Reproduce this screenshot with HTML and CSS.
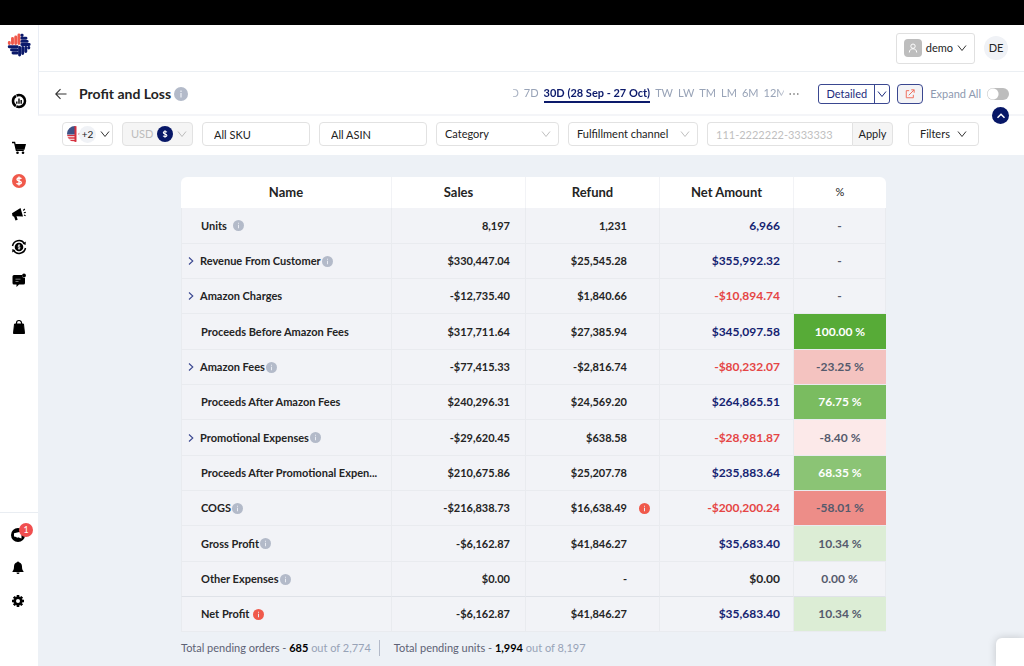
FILE: index.html
```html
<!DOCTYPE html>
<html lang="en">
<head>
<meta charset="utf-8">
<title>Profit and Loss</title>
<link rel="stylesheet" href="styles.css">
</head>
<body>
<svg class="sprite" aria-hidden="true">
  <symbol id="down" viewBox="0 0 10 10"><path d="M1 2.500 5 7.500 9 2.500" fill="none" stroke="currentColor"/></symbol>
  <symbol id="right" viewBox="0 0 10 10"><path d="M3 1.500 6.800 5 3 8.500" fill="none" stroke="currentColor" stroke-width="1.100"/></symbol>
  <symbol id="info" viewBox="0 0 12 12"><circle cx="6" cy="6" r="6" fill="currentColor"/><path d="M6 5.200V9M6 3v1.200" stroke="#e9ecf3" stroke-width="1.100"/></symbol>
</svg>
<div class="topstrip"></div>
<div class="app">
  <aside class="sidebar">
    <a class="logo" href="#" aria-label="Home">
      <svg viewBox="0 0 24 24" width="24" height="24">
        <g stroke-width="2.900" stroke-linecap="round" fill="none">
          <path d="M2.300 10.500V9.500M5.500 10.500V5.500M8.700 10.500V4M11.900 10.500V2" stroke="#f0594b"/>
          <path d="M14.800 2.200h.4M14.800 5.300h4.200M14.800 8.400h5.400M14.800 11.500h7.400M2.200 13.800h8M4.500 16.900h5.700M6 20h4.200" stroke="#0c1a6b"/>
          <path d="M12.600 14.500V22M15.700 14.500V20.500M18.800 14.500V18.500M21.800 14.400v.6" stroke="#0c1a6b"/>
        </g>
      </svg>
    </a>
    <nav class="nav">
      <ul>
        <li><a href="#" aria-label="Dashboard"><svg viewBox="0 0 16 16" width="16" height="16"><circle cx="8" cy="8" r="6" fill="none" stroke="#000" stroke-width="2.500" stroke-dasharray="11.900 .6"/><path d="M5.800 10.800V8.500M8 10.800V5.500M10.200 10.800V7" stroke="#000" stroke-width="1.400"/></svg></a></li>
      </ul>
      <ul>
        <li><a href="#" aria-label="Orders"><svg viewBox="0 0 16 16" width="16" height="16"><path d="M1 2.500h2.600l1.800 7.800h7.400" fill="none" stroke="#000" stroke-width="1.300"/><path d="M4 4h11l-1.500 5.800H5.300z"/><circle cx="6.500" cy="12.800" r="1.300"/><circle cx="12" cy="12.800" r="1.300"/></svg></a></li>
        <li><a href="#" aria-label="Profit and Loss"><svg viewBox="0 0 16 16" width="16" height="16"><circle cx="8" cy="8" r="7" fill="#f0594b"/><path d="M10.300 5.800C9.800 4.900 6 4.500 6 6.400c0 2 4.300 1 4.300 3.200 0 2-4 1.800-4.700.5M8 3.500v9" fill="none" stroke="#fff" stroke-width="1.400"/></svg></a></li>
        <li><a href="#" aria-label="Advertising"><svg viewBox="0 0 16 16" width="16" height="16"><path d="M1 7.300 9.500 2l2.500 8.500-6.500-.3 1.200 3.600-2.200.7-1.400-3.700L1.500 10z"/><path d="m12.300 4.500 1.500-1.500M12.800 6.800l2-.4M13 9l1.600.8" stroke="#000" stroke-width="1.100"/></svg></a></li>
        <li><a href="#" aria-label="Reimbursements"><svg viewBox="0 0 16 16" width="16" height="16"><circle cx="8" cy="8" r="4.300"/><path d="M1.500 7a6.600 6.600 0 0 1 12-2.400M14.500 9a6.600 6.600 0 0 1-12 2.400" fill="none" stroke="#000" stroke-width="1.500"/><path d="m14.800 2.500-.2 3.500-3-1.200zM1.200 13.500 1.400 10l3 1.200z"/><path d="M9.200 6.700c-.6-.8-2.400-.5-2.200.5.200.9 2.200.6 2.200 1.700 0 1-1.800 1.100-2.400.2M8 5.300v5.400" stroke="#fff" stroke-width=".8" fill="none"/></svg></a></li>
        <li><a href="#" aria-label="Messages"><svg viewBox="0 0 16 16" width="16" height="16"><path d="M3 3h8a3 3 0 0 0 3 3v5a1.500 1.500 0 0 1-1.500 1.500H8L5.500 15v-2.500H3A1.500 1.500 0 0 1 1.500 11V4.500A1.500 1.500 0 0 1 3 3z"/><circle cx="13" cy="3.500" r="1.900"/><path d="M4.500 7.200h5M4.500 9.500h3" stroke="#999" stroke-width=".8"/></svg></a></li>
      </ul>
      <ul>
        <li><a href="#" aria-label="Products"><svg viewBox="0 0 16 16" width="16" height="16"><path d="M3.500 5h9l1 9.500h-11z" stroke="#000" stroke-linejoin="round"/><path d="M5.500 6V4a2.500 2.500 0 0 1 5 0v2" fill="none" stroke="#000" stroke-width="1.200"/></svg></a></li>
      </ul>
    </nav>
    <ul class="tools">
      <li><a href="#" aria-label="Announcements"><svg viewBox="0 0 16 16" width="16" height="16"><circle cx="8" cy="8" r="7"/><path d="M4 6.200 11.500 4.500v7L8 10.200l-1 .8-.6-1L4 9.500z" fill="#fff"/></svg><span class="badge">1</span></a></li>
      <li><a href="#" aria-label="Notifications"><svg viewBox="0 0 16 16" width="16" height="16"><path d="M8 2.200c2.700 0 4 1.900 4 4.300 0 2.700.6 3.700 1.500 4.700v.8h-11v-.8c.900-1 1.500-2 1.500-4.700 0-2.400 1.300-4.300 4-4.300z"/><circle cx="8" cy="2.500" r="1"/><path d="M6.500 12.500h3a1.500 1.500 0 0 1-3 0z"/></svg></a></li>
      <li><a href="#" aria-label="Settings"><svg viewBox="0 0 16 16" width="16" height="16"><circle cx="8" cy="8" r="3.300" fill="none" stroke="#000" stroke-width="2.600"/><path d="M8 2v2M8 12v2M2 8h2M12 8h2M3.800 3.800l1.400 1.400M10.800 10.800l1.400 1.400M3.800 12.200l1.400-1.400M10.800 5.200l1.400-1.400" stroke="#000" stroke-width="2.600"/></svg></a></li>
    </ul>
  </aside>

  <div class="page">
    <header class="account">
      <button class="user"><span class="avatar"><svg viewBox="0 0 12 12" width="12" height="12"><circle cx="6" cy="4.200" r="2.200" fill="none" stroke="#fff"/><path d="M2.300 10.500c0-5 7.400-5 7.400 0" fill="none" stroke="#fff"/></svg></span>demo<svg class="chev" width="10" height="10"><use href="#down"/></svg></button>
      <span class="initials">DE</span>
    </header>

    <div class="titlebar">
      <a class="back" href="#" aria-label="Back"><svg viewBox="0 0 12 12" width="12" height="12"><path d="M11.500 6H1M5.500 1.200.8 6l4.700 4.800" fill="none" stroke="#333" stroke-width="1.100"/></svg></a>
      <h1>Profit and Loss</h1>
      <svg class="info" width="14" height="14"><use href="#info"/></svg>
      <div class="ranges">
        <button>D</button><button>7D</button><button class="current">30D (28 Sep - 27 Oct)</button><button>TW</button><button>LW</button><button>TM</button><button>LM</button><button>6M</button><button>12M</button>
      </div>
      <button class="more" aria-label="More ranges"><svg viewBox="0 0 10 4" width="10" height="4"><g fill="#555"><circle cx="1.200" cy="2" r=".8"/><circle cx="5" cy="2" r=".8"/><circle cx="8.800" cy="2" r=".8"/></g></svg></button>
      <div class="split"><button class="view">Detailed</button><button class="viewmenu" aria-label="Choose view"><svg width="10" height="10"><use href="#down"/></svg></button></div>
      <button class="export" aria-label="Export"><svg viewBox="0 0 12 12" width="10" height="10"><path d="M5 2H1.500v8.500H10V7M4.500 7.500 11 1M7.500 1H11v3.500" fill="none" stroke="#f0705f" stroke-width="1.200"/></svg></button>
      <label class="expand">Expand All<input type="checkbox"></label>
      <button class="collapse" aria-label="Hide filters"><svg viewBox="0 0 10 10" width="10" height="10"><path d="M1.500 6.800 5 3.300l3.500 3.500" fill="none" stroke="#fff" stroke-width="1.500"/></svg></button>
    </div>

    <div class="filters">
      <button class="field markets" aria-label="Marketplaces"><svg class="flag" viewBox="0 0 14 16" width="14" height="16"><clipPath id="disc"><circle cx="8" cy="8" r="8"/></clipPath><g clip-path="url(#disc)"><path d="M0 0h14v16H0z" fill="#fff"/><path d="M0 9.500h9M0 12h9M0 14.500h9" stroke="#d5303e" stroke-width="1.300"/><path d="M0 0h8v8.500H0z" fill="#3f5286"/><path d="M8.500 0v16" stroke="#d5303e" stroke-width="2"/><path d="M11 8l3-2v4z" fill="#d5303e"/></g></svg><span class="count">+2</span><svg class="chev" width="10" height="10"><use href="#down"/></svg></button>
      <button class="field currency" disabled>USD<svg viewBox="0 0 16 16" width="16" height="16"><circle cx="8" cy="8" r="8" fill="#071767"/><path d="M9.900 6.300C9.300 5.200 6.300 5.200 6.300 6.700c0 1.700 3.600.9 3.600 2.700 0 1.500-3.100 1.500-3.800.3M8 4.200v7.600" stroke="#fff" stroke-width="1.100" fill="none"/></svg><svg class="chev" width="10" height="10"><use href="#down"/></svg></button>
      <input class="field sku" type="text" placeholder="All SKU" aria-label="SKU">
      <input class="field sku" type="text" placeholder="All ASIN" aria-label="ASIN">
      <div class="pick category"><select class="field" aria-label="Category"><option>Category</option></select><svg width="10" height="10"><use href="#down"/></svg></div>
      <div class="pick channel"><select class="field" aria-label="Fulfillment channel"><option>Fulfillment channel</option></select><svg width="10" height="10"><use href="#down"/></svg></div>
      <div class="order"><input class="field" type="text" placeholder="111-2222222-3333333" aria-label="Order number"><button class="field apply">Apply</button></div>
      <button class="field morefilters">Filters<svg class="chev" width="10" height="10"><use href="#down"/></svg></button>
    </div>

    <main>
      <div class="report">
      <table>
        <colgroup><col class="c-name"><col class="c-num"><col class="c-num"><col class="c-num"><col class="c-pct"></colgroup>
        <thead><tr><th>Name</th><th>Sales</th><th>Refund</th><th>Net Amount</th><th class="pcthead">%</th></tr></thead>
        <tbody>
          <tr><th scope="row"><div class="name spaced">Units<svg class="info"><use href="#info"/></svg></div></th><td>8,197</td><td>1,231</td><td>6,966</td><td>-</td></tr>
          <tr><th scope="row"><div class="name"><button aria-label="Expand"><svg width="10" height="10"><use href="#right"/></svg></button>Revenue From Customer<svg class="info"><use href="#info"/></svg></div></th><td>$330,447.04</td><td>$25,545.28</td><td>$355,992.32</td><td>-</td></tr>
          <tr><th scope="row"><div class="name"><button aria-label="Expand"><svg width="10" height="10"><use href="#right"/></svg></button>Amazon Charges</div></th><td>-$12,735.40</td><td>$1,840.66</td><td class="neg">-$10,894.74</td><td>-</td></tr>
          <tr><th scope="row"><div class="name">Proceeds Before Amazon Fees</div></th><td>$317,711.64</td><td>$27,385.94</td><td>$345,097.58</td><td class="g4">100.00 %</td></tr>
          <tr><th scope="row"><div class="name"><button aria-label="Expand"><svg width="10" height="10"><use href="#right"/></svg></button>Amazon Fees<svg class="info"><use href="#info"/></svg></div></th><td>-$77,415.33</td><td>-$2,816.74</td><td class="neg">-$80,232.07</td><td class="r2">-23.25 %</td></tr>
          <tr><th scope="row"><div class="name">Proceeds After Amazon Fees</div></th><td>$240,296.31</td><td>$24,569.20</td><td>$264,865.51</td><td class="g3">76.75 %</td></tr>
          <tr><th scope="row"><div class="name"><button aria-label="Expand"><svg width="10" height="10"><use href="#right"/></svg></button>Promotional Expenses<svg class="info"><use href="#info"/></svg></div></th><td>-$29,620.45</td><td>$638.58</td><td class="neg">-$28,981.87</td><td class="r1">-8.40 %</td></tr>
          <tr><th scope="row"><div class="name">Proceeds After Promotional Expen...</div></th><td>$210,675.86</td><td>$25,207.78</td><td>$235,883.64</td><td class="g2">68.35 %</td></tr>
          <tr><th scope="row"><div class="name">COGS<svg class="info"><use href="#info"/></svg></div></th><td>-$216,838.73</td><td class="flagged"><span>$16,638.49<svg class="info alert"><use href="#info"/></svg></span></td><td class="neg">-$200,200.24</td><td class="r3">-58.01 %</td></tr>
          <tr><th scope="row"><div class="name">Gross Profit<svg class="info"><use href="#info"/></svg></div></th><td>-$6,162.87</td><td>$41,846.27</td><td>$35,683.40</td><td class="g1">10.34 %</td></tr>
          <tr class="last"><th scope="row"><div class="name">Other Expenses<svg class="info"><use href="#info"/></svg></div></th><td>$0.00</td><td>-</td><td class="zero">$0.00</td><td>0.00 %</td></tr>
          <tr><th scope="row"><div class="name wide">Net Profit<svg class="info alert"><use href="#info"/></svg></div></th><td>-$6,162.87</td><td>$41,846.27</td><td>$35,683.40</td><td class="g1">10.34 %</td></tr>
        </tbody>
      </table>
      <footer class="pending">
        <p>Total pending orders - <b>685</b> <span>out of 2,774</span></p>
        <p>Total pending units - <b>1,994</b> <span>out of 8,197</span></p>
      </footer>
      </div>
    </main>
  </div>
</div>
<div class="chat"></div>
</body>
</html>
```
FILE: styles.css
```css
* { box-sizing: border-box; }
body {
  margin: 0;
  min-height: 100vh;
  display: flex;
  flex-direction: column;
  overflow: hidden;
  background: #edf1f6;
  color: #242424;
  font: 11px/16px Lato, "Open Sans", sans-serif;
}
button, input, select { font: inherit; color: inherit; margin: 0; }
button { border: 0; padding: 0; background: none; }
ul { list-style: none; margin: 0; padding: 0; }
svg { display: block; flex: none; }
.sprite { position: absolute; width: 0; height: 0; }

.topstrip { height: 25px; background: #000; }
.app { flex: 1; display: flex; }

.sidebar {
  width: 38px;
  flex: none;
  display: flex;
  flex-direction: column;
  background: #fff;
}
.logo { height: 40px; display: flex; align-items: center; justify-content: center; }
.nav { display: flex; flex-direction: column; gap: 14px; padding-top: 19px; }
.sidebar li a { height: 33px; display: flex; align-items: center; justify-content: center; position: relative; }
.tools { margin-top: auto; padding: 5px 2px 49px 0; border-top: 1px solid #e9edf2; }
.badge {
  position: absolute;
  left: 19px;
  top: 5px;
  width: 14px;
  height: 14px;
  border-radius: 50%;
  background: #f04f4f;
  color: #fff;
  font-size: 9px;
  line-height: 14px;
  text-align: center;
}

.page { flex: 1; min-width: 0; display: flex; flex-direction: column; }
.account {
  height: 47px;
  display: flex;
  align-items: center;
  justify-content: flex-end;
  gap: 9px;
  padding-right: 16px;
  background: #fff;
  border-left: 1px solid #e9edf4;
  border-bottom: 1px solid #ebeff3;
}
.user {
  height: 31px;
  display: flex;
  align-items: center;
  gap: 4px;
  padding: 0 7px;
  border: 1px solid #e0e0e0;
  border-radius: 3px;
}
.avatar { width: 18px; height: 18px; border-radius: 4px; background: #bdbdbd; display: grid; place-items: center; }
.chev { color: #333; }
.initials { width: 24px; height: 24px; border-radius: 50%; background: #f0f2f6; line-height: 24px; text-align: center; }

.titlebar {
  position: relative;
  height: 44px;
  display: flex;
  align-items: center;
  padding: 2px 15px 0 16px;
  background: #fff;
  border-left: 1px solid #e9edf4;
  border-bottom: 2px solid #f4f5f8;
}
h1 { margin: 0 3px 0 12px; font-size: 14px; line-height: 20px; font-weight: 700; }
.info { width: 11px; height: 11px; color: #b3bac9; }
.titlebar .info { width: 14px; height: 14px; }
.ranges {
  width: 271px;
  margin-left: auto;
  display: flex;
  gap: 5px;
  overflow: hidden;
  color: #98a3b7;
  -webkit-mask-image: linear-gradient(90deg, rgba(0,0,0,.6), #000 8px, #000 263px, rgba(0,0,0,.6));
  mask-image: linear-gradient(90deg, rgba(0,0,0,.6), #000 8px, #000 263px, rgba(0,0,0,.6));
}
.ranges button { flex: none; border-bottom: 2px solid transparent; }
.ranges button:first-child { margin-left: -3px; }
.ranges .current { color: #0c1a6b; font-weight: 700; border-color: #0c1a6b; }
.more { margin: 0 19px 0 5px; }
.split { display: flex; height: 20px; border: 1px solid #3a4790; border-radius: 3px; color: #1d2b7c; }
.view { padding: 0 7px; }
.viewmenu { padding: 0 2px; border-left: 1px solid #3a4790; }
.export {
  width: 26px;
  height: 20px;
  margin: 0 7px;
  display: grid;
  place-items: center;
  border: 1px solid #3a4790;
  border-radius: 4px;
  background: #f3f3f6;
}
.expand { display: flex; align-items: center; gap: 6px; color: #8e9ab0; }
.expand input {
  appearance: none;
  width: 22px;
  height: 12px;
  border-radius: 6px;
  background: radial-gradient(circle at 6px 6px, #fff 5px, transparent 6px) #bdbdbd;
}
.collapse {
  position: absolute;
  right: 15px;
  bottom: -10px;
  width: 17px;
  height: 17px;
  display: grid;
  place-items: center;
  border-radius: 50%;
  background: #071767;
  z-index: 1;
}

.filters {
  height: 39px;
  display: flex;
  align-items: center;
  gap: 9px;
  padding: 0 45px 3px 24px;
  background: #fff;
}
.filters > * { flex: none; }
.field {
  height: 24px;
  border: 1px solid #e2e2e2;
  border-radius: 4px;
  background: #fff;
  color: #222;
}
button.field { display: flex; align-items: center; }
.markets { width: 51px; padding-left: 4px; }
.markets .flag { margin-right: -2px; }
.count { width: 17px; height: 17px; border-radius: 50%; background: #f0f2f6; line-height: 17px; font-size: 10px; text-align: center; margin-right: 4px; }
.currency { width: 71px; padding-left: 8px; gap: 4px; background: #f5f5f5; color: #bcbcbc; }
.currency .chev { color: #bcbcbc; }
.sku { width: 108px; padding: 0 11px; }
.sku::placeholder { color: #222; opacity: 1; }
.pick { display: grid; align-items: center; color: #bfbfbf; }
.pick select { grid-area: 1 / 1; width: 100%; padding: 0 8px; appearance: none; }
.pick svg { grid-area: 1 / 1; justify-self: end; margin-right: 8px; pointer-events: none; }
.category { width: 123px; }
.channel { width: 130px; }
.filters .order { display: flex; flex: 1 1 0; min-width: 0; }
.order input { flex: 1; min-width: 0; padding: 0 8px; border-radius: 4px 0 0 4px; border-right: 0; }
.order input::placeholder { color: #bfbfbf; }
.order .apply { width: 41px; justify-content: center; border-radius: 0 4px 4px 0; background: #f5f5f5; }
.morefilters { width: 71px; margin-left: 6px; padding-left: 11px; gap: 7px; }

main { padding: 22px 0 0 143px; }
.report { max-width: 705px; }
table {
  width: 100%;
  table-layout: fixed;
  border-collapse: separate;
  border-spacing: 0;
  border-radius: 6px 6px 0 0;
  overflow: hidden;
}
.c-name { width: 211px; }
.c-num { width: 134px; }
thead th {
  height: 31px;
  padding: 0 0 2px;
  background: #fff;
  border-right: 1px solid #f2f3f6;
  font-size: 13px;
  font-weight: 700;
}
thead .pcthead { font-size: 11px; font-weight: 400; border-right: 0; }
tbody th, td {
  height: 35px;
  padding: 0 15px 0 0;
  background: #f2f3f7;
  border: 0 solid #e9ebef;
  border-width: 0 1px 1px 0;
  text-align: right;
  font-weight: 700;
}
tbody tr:nth-child(3n + 1) > * { height: 36px; }
tbody th { padding: 0 0 0 4px; border-left-width: 1px; text-align: left; white-space: nowrap; }
.last > * { border-bottom-color: #dfe2e8; }
.name { display: flex; align-items: center; gap: 1px; padding-left: 15px; }
.name:has(button) { padding-left: 0; }
.name button { width: 13px; color: #3a4790; }
.spaced { gap: 6px; }
.wide { gap: 4px; }
td:nth-child(3) { padding-right: 32px; }
td.flagged { padding-right: 9px; }
.flagged span { display: flex; justify-content: flex-end; align-items: center; gap: 12px; }
.info.alert { color: #f0594b; }
td:nth-child(4) { padding-right: 13px; color: #152371; font-size: 12px; }
td:nth-child(5) { padding: 0; text-align: center; color: #555a6c; font-size: 12px; }
td.neg { color: #e54545; }
td.zero { color: #242424; }
td.g1, td.g2, td.g3, td.g4, td.r1, td.r2, td.r3 { border-right: 0; }
td.g1 { background: #dcedd5; }
tbody td.g2 { background: #8bc475; color: #fff; }
tbody td.g3 { background: #7abc60; color: #fff; }
tbody td.g4 { background: #57ab37; color: #fff; }
td.r1 { background: #fce9e9; }
td.r2 { background: #f4c3c0; }
td.r3 { background: #ed8d88; }

.pending { display: flex; padding-top: 8px; color: #5d6275; }
.pending p { margin: 0; }
.pending p + p { margin-left: 8px; padding-left: 14px; border-left: 1px solid #b3bac9; }
.pending b { color: #000; }
.pending span { color: #98a3b7; }

.chat {
  position: fixed;
  right: 0;
  bottom: 0;
  width: 28px;
  height: 28px;
  border-radius: 6px 0 0 0;
  background: #fff;
  box-shadow: 0 0 8px rgba(0, 0, 0, .18);
}
```
